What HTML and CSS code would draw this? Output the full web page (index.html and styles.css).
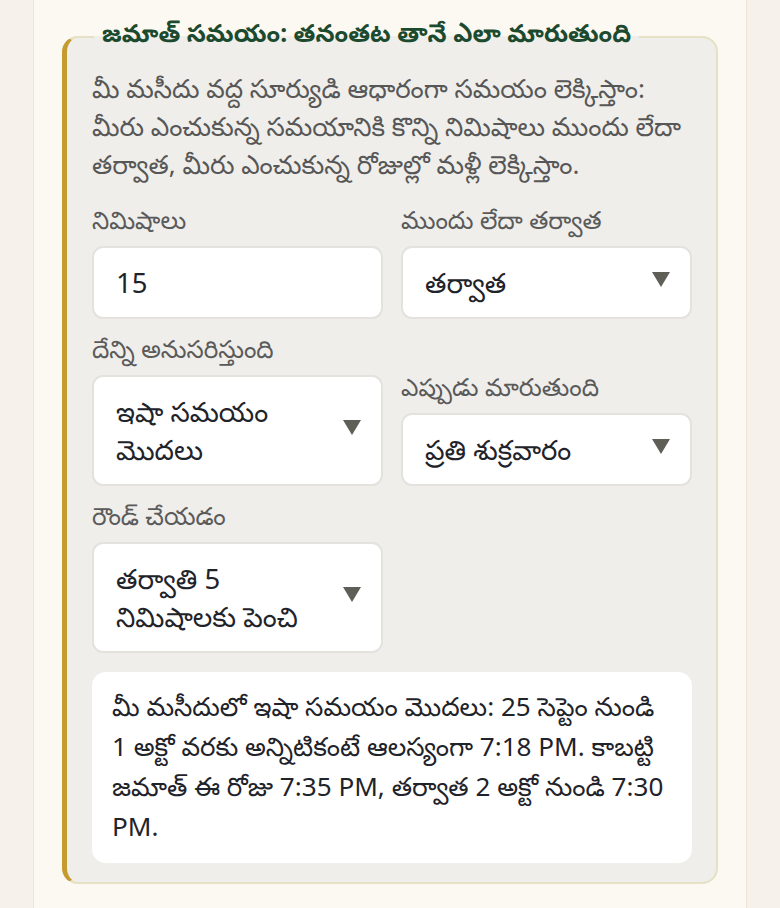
FILE: index.html
```html
<!DOCTYPE html>
<html lang="te">
<head>
<meta charset="utf-8">
<title>జమాత్ సమయం</title>
<link rel="stylesheet" href="styles.css">
</head>
<body>
<main class="page">
  <fieldset class="panel">
    <legend class="panel-title">జమాత్ సమయం: తనంతట తానే ఎలా మారుతుంది</legend>
    <p class="intro">మీ మసీదు వద్ద సూర్యుడి ఆధారంగా సమయం లెక్కిస్తాం: మీరు ఎంచుకున్న సమయానికి కొన్ని నిమిషాలు ముందు లేదా తర్వాత, మీరు ఎంచుకున్న రోజుల్లో మళ్లీ లెక్కిస్తాం.</p>
    <div class="grid">
      <div class="field">
        <span class="label">నిమిషాలు</span>
        <div class="control"><span class="value">15</span></div>
      </div>
      <div class="field">
        <span class="label">ముందు లేదా తర్వాత</span>
        <div class="control select"><span class="value">తర్వాత</span><span class="arrow"></span></div>
      </div>
      <div class="field">
        <span class="label">దేన్ని అనుసరిస్తుంది</span>
        <div class="control select"><span class="value">ఇషా సమయం మొదలు</span><span class="arrow"></span></div>
      </div>
      <div class="field">
        <span class="label">ఎప్పుడు మారుతుంది</span>
        <div class="control select"><span class="value">ప్రతి శుక్రవారం</span><span class="arrow"></span></div>
      </div>
      <div class="field">
        <span class="label">రౌండ్ చేయడం</span>
        <div class="control select"><span class="value">తర్వాతి 5 నిమిషాలకు పెంచి</span><span class="arrow"></span></div>
      </div>
    </div>
    <div class="result">మీ మసీదులో ఇషా సమయం మొదలు: 25 సెప్టెం నుండి 1 అక్టో వరకు అన్నిటికంటే ఆలస్యంగా 7:18 PM. కాబట్టి జమాత్ ఈ రోజు 7:35 PM, తర్వాత 2 అక్టో నుండి 7:30 PM.</div>
  </fieldset>
</main>
</body>
</html>
```

FILE: styles.css
```css
html, body {
  margin: 0;
  padding: 0;
}
body {
  background: #f6f2eb;
  font-family: "Noto Sans", "Noto Sans Telugu", sans-serif;
  color: #222;
}
.page {
  width: 714px;
  margin: 0 auto;
  min-height: 908px;
  box-sizing: border-box;
  padding: 14px 28px 22px;
  background: #fcf9f2;
  border-left: 1px solid #ece5d3;
  border-right: 1px solid #ece5d3;
}
.panel {
  margin: 0;
  padding: 9px 24px 19px 25px;
  background: #efeeea;
  border: 2px solid #e4e1c4;
  border-left: 5px solid #c59a2e;
  border-radius: 16px;
  min-width: 0;
}
.panel-title {
  padding: 0 8px 10px;
  margin-left: 2px;
  font-size: 24.8px;
  font-weight: 700;
  color: #1c4a2f;
  line-height: 36px;
}
.intro {
  margin: 0 0 23px;
  font-size: 26px;
  line-height: 38px;
  color: #575757;
}
.grid {
  display: grid;
  grid-template-columns: 1fr 1fr;
  column-gap: 18px;
  row-gap: 16px;
  align-items: end;
}
.field {
  display: flex;
  flex-direction: column;
  gap: 12px;
}
.label {
  font-size: 24.5px;
  line-height: 28px;
  color: #5a5a5a;
}
.control {
  display: flex;
  align-items: center;
  gap: 12px;
  min-height: 73px;
  box-sizing: border-box;
  padding: 15.5px 20px 15.5px 22px;
  background: #fff;
  border: 2px solid #e3e2dd;
  border-radius: 11px;
  font-size: 27.5px;
  line-height: 38px;
  color: #1f232a;
}
.value {
  flex: 1;
}
.arrow {
  width: 0;
  height: 0;
  border-left: 9px solid transparent;
  border-right: 9px solid transparent;
  border-top: 15px solid #5f5f58;
  margin-top: -7px;
}
.result {
  margin-top: 19px;
  padding: 14px 20px 17px;
  background: #fff;
  border-radius: 14px;
  font-size: 26.1px;
  line-height: 40px;
  color: #1f232a;
}
```
